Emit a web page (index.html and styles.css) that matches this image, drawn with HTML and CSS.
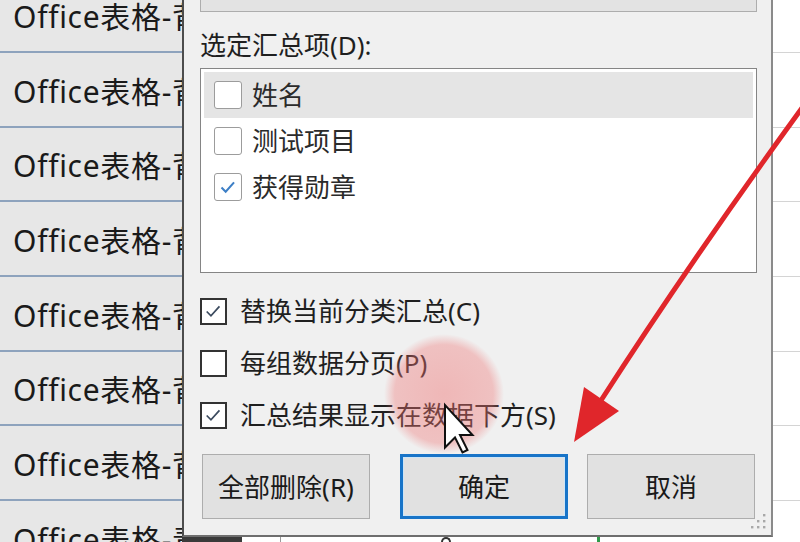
FILE: index.html
```html
<!DOCTYPE html>
<html lang="zh-CN">
<head>
<meta charset="utf-8">
<title>分类汇总</title>
<link rel="stylesheet" href="styles.css">
</head>
<body>
<div class="screen">
  <div class="sheet sheet-left">
    <div class="srow"><span class="cell-text">Office表格-背景</span></div>
    <div class="srow"><span class="cell-text">Office表格-背景</span></div>
    <div class="srow"><span class="cell-text">Office表格-背景</span></div>
    <div class="srow"><span class="cell-text">Office表格-背景</span></div>
    <div class="srow"><span class="cell-text">Office表格-背景</span></div>
    <div class="srow"><span class="cell-text">Office表格-背景</span></div>
    <div class="srow"><span class="cell-text">Office表格-背景</span></div>
    <div class="srow"><span class="cell-text">Office表格-青景</span></div>
  </div>

  <div class="middle">
    <div class="dialog">
      <div class="combo"></div>
      <div class="label">选定汇总项(D):</div>
      <div class="listbox">
        <div class="item selected"><span class="lcb"></span><span class="itext">姓名</span></div>
        <div class="item"><span class="lcb"></span><span class="itext">测试项目</span></div>
        <div class="item"><span class="lcb"><svg viewBox="0 0 28 28" class="lcheck"><path d="M7 14.5 L11.5 19 L20.5 9"/></svg></span><span class="itext">获得勋章</span></div>
      </div>
      <div class="options">
        <div class="opt"><span class="cb"><svg viewBox="0 0 27 27" class="check"><path d="M5.5 13.5 L10.5 18.5 L20.5 7.5"/></svg></span><span class="otext">替换当前分类汇总(C)</span></div>
        <div class="opt"><span class="cb"></span><span class="otext">每组数据分页(P)</span></div>
        <div class="opt"><span class="cb"><svg viewBox="0 0 27 27" class="check"><path d="M5.5 13.5 L10.5 18.5 L20.5 7.5"/></svg></span><span class="otext">汇总结果显示在数据下方(S)</span></div>
      </div>
      <div class="buttons">
        <button class="btn btn-delete">全部删除(R)</button>
        <button class="btn btn-ok">确定</button>
        <button class="btn btn-cancel">取消</button>
      </div>
      <svg class="grip" viewBox="0 0 16 18">
        <rect x="12" y="0" width="2.4" height="2.4"/>
        <rect x="6" y="6" width="2.4" height="2.4"/><rect x="12" y="6" width="2.4" height="2.4"/>
        <rect x="0" y="12" width="2.4" height="2.4"/><rect x="6" y="12" width="2.4" height="2.4"/><rect x="12" y="12" width="2.4" height="2.4"/>
      </svg>
    </div>
    <div class="under">
      <span class="under-dark"></span>
      <span class="under-line"></span>
      <span class="under-eight"></span>
      <span class="under-green"></span>
    </div>
  </div>

  <div class="sheet sheet-right">
    <div class="grow"></div>
    <div class="grow"></div>
    <div class="grow"></div>
    <div class="grow"></div>
    <div class="grow"></div>
    <div class="grow"></div>
    <div class="grow"></div>
    <div class="grow"></div>
  </div>

  <svg class="overlay" viewBox="0 0 800 542" width="800" height="542">
    <defs>
      <radialGradient id="pink" cx="0.5" cy="0.5" r="0.5">
        <stop offset="0" stop-color="#ee6f6f" stop-opacity="0.44"/>
        <stop offset="0.82" stop-color="#ee7474" stop-opacity="0.38"/>
        <stop offset="1" stop-color="#ee7a7a" stop-opacity="0"/>
      </radialGradient>
    </defs>
    <circle cx="444" cy="394" r="60" fill="url(#pink)"/>
    <path d="M802 108 Q690 262 600 402" fill="none" stroke="#e0262b" stroke-width="5" stroke-linecap="round"/>
    <polygon points="574,442 619,411 584,387" fill="#e0262b"/>
    <path d="M445 405 L445 447.5 L455 437.5 L462.5 452.5 L467.5 450 L460 435 L472.5 435 Z" fill="#ffffff" stroke="#111111" stroke-width="2" stroke-linejoin="miter"/>
  </svg>
</div>
</body>
</html>
```

FILE: styles.css
```css
* { box-sizing: border-box; }

html, body {
  margin: 0;
  padding: 0;
}

body {
  width: 800px;
  height: 542px;
  overflow: hidden;
  background: #ffffff;
  font-family: "Noto Sans", "Noto Sans CJK SC", sans-serif;
  color: #1e1e1e;
}

.screen {
  position: relative;
  width: 800px;
  height: 542px;
  display: grid;
  grid-template-columns: 182px 591px 27px;
  overflow: hidden;
}

/* spreadsheet columns */
.sheet {
  display: flex;
  flex-direction: column;
  overflow: hidden;
  height: 542px;
}

.sheet-left {
  background: #e7e7e7;
}

.srow {
  flex: 0 0 74.67px;
  height: 74.67px;
  border-bottom: 2px solid #8ea3bd;
  display: flex;
  align-items: center;
  padding: 5px 0 0 13px;
  overflow: hidden;
  white-space: nowrap;
}

.srow:first-child,
.grow:first-child {
  margin-top: -21.67px;
}

.cell-text {
  font-size: 30px;
  line-height: 30px;
  color: #1a1a1a;
  letter-spacing: 0.7px;
}

.sheet-right {
  background: #ffffff;
}

.grow {
  flex: 0 0 74.67px;
  height: 74.67px;
  border-bottom: 1px solid #d4d4d4;
}

/* middle: dialog + strip of sheet under it */
.middle {
  display: flex;
  flex-direction: column;
  height: 542px;
}

.dialog {
  position: relative;
  flex: 0 0 537px;
  height: 537px;
  background: #f0f0f0;
  border-left: 2px solid #4d4d4d;
  border-right: 2px solid #8a8a8a;
  border-bottom: 2px solid #6e6e6e;
  padding: 0 14px 16px 16px;
  display: flex;
  flex-direction: column;
}

.combo {
  height: 12px;
  background: #e3e3e3;
  border: 1px solid #adadad;
  border-top: none;
}

.label {
  margin-top: 18px;
  margin-bottom: 8px;
  height: 30px;
  font-size: 26px;
  line-height: 30px;
  color: #1f1f1f;
}

.listbox {
  height: 205px;
  background: #ffffff;
  border: 1px solid #858585;
  padding: 3px;
  display: flex;
  flex-direction: column;
}

.item {
  height: 46px;
  display: flex;
  align-items: center;
  padding-left: 10px;
}

.item.selected {
  background: #e5e5e5;
}

.lcb {
  width: 28px;
  height: 28px;
  border: 1.5px solid #9c9c9c;
  border-radius: 3px;
  background: #ffffff;
  display: flex;
}

.lcheck {
  width: 100%;
  height: 100%;
  fill: none;
  stroke: #3d7fc6;
  stroke-width: 2.2;
}

.itext {
  margin-left: 10px;
  font-size: 26px;
  line-height: 30px;
  color: #2b2b2b;
}

.options {
  margin-top: 12px;
  display: flex;
  flex-direction: column;
}

.opt {
  height: 52px;
  display: flex;
  align-items: center;
}

.cb {
  width: 27px;
  height: 27px;
  border: 2px solid #333333;
  background: #ffffff;
  display: flex;
}

.check {
  width: 100%;
  height: 100%;
  fill: none;
  stroke: #3b4a5e;
  stroke-width: 2;
}

.otext {
  margin-left: 13px;
  font-size: 26px;
  line-height: 30px;
  color: #1f1f1f;
}

.buttons {
  margin-top: 13px;
  display: flex;
  height: 65px;
}

.btn {
  width: 168px;
  height: 65px;
  background: #e1e1e1;
  border: 1px solid #adadad;
  font-family: "Noto Sans", "Noto Sans CJK SC", sans-serif;
  font-size: 26px;
  line-height: 30px;
  color: #1a1a1a;
  padding: 0;
  display: flex;
  align-items: center;
  justify-content: center;
}

.btn-delete {
  margin-left: 2px;
}

.btn-ok {
  margin-left: 30px;
  border: 3px solid #1874c8;
  box-shadow: inset 0 0 0 1px #cde5f7;
}

.btn-cancel {
  margin-left: 19px;
}

.grip {
  position: absolute;
  right: 4px;
  bottom: 3px;
  width: 16px;
  height: 18px;
  fill: #a8a8a8;
}

.under {
  flex: 1;
  background: #ffffff;
  position: relative;
  display: flex;
  align-items: stretch;
}

.under-dark {
  width: 60px;
  background: #3a3a3a;
}

.under-line {
  width: 1px;
  margin-left: 38px;
  background: #9a9a9a;
}

.under-eight {
  width: 10px;
  margin-left: 160px;
  border: 2px solid #333;
  border-bottom: none;
  border-radius: 5px 5px 0 0;
}

.under-green {
  width: 3px;
  margin-left: 146px;
  background: #2f9a4a;
}

.overlay {
  position: absolute;
  left: 0;
  top: 0;
  width: 800px;
  height: 542px;
  pointer-events: none;
}
```
